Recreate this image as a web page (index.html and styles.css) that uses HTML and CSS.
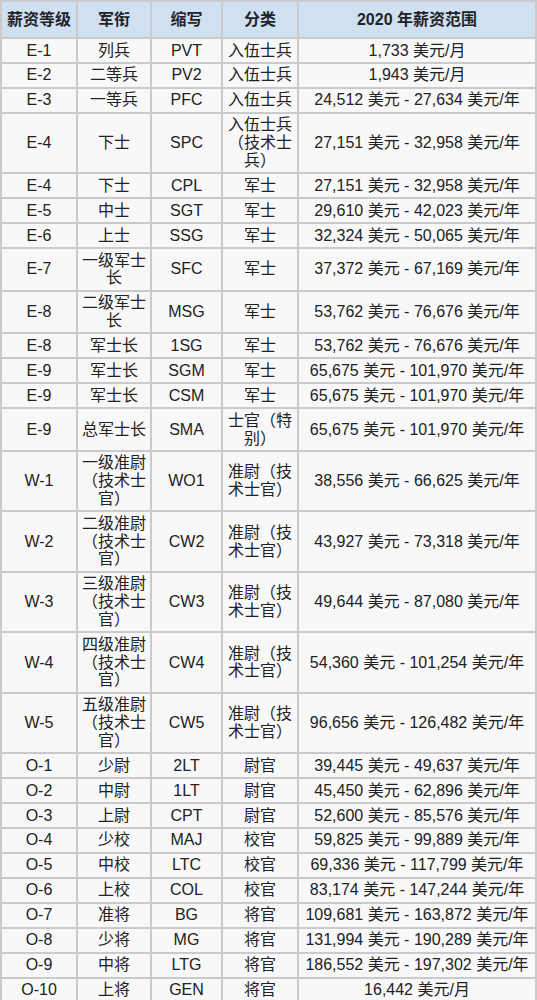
FILE: index.html
```html
<!DOCTYPE html>
<html lang="zh">
<head>
<meta charset="utf-8">
<title>薪资等级</title>
<link rel="stylesheet" href="styles.css">
</head>
<body>
<table class="pay">
<colgroup>
<col class="c1"><col class="c2"><col class="c3"><col class="c4"><col class="c5">
</colgroup>
<thead>
<tr><th>薪资等级</th><th>军衔</th><th>缩写</th><th>分类</th><th>2020 年薪资范围</th></tr>
</thead>
<tbody>
<tr><td>E-1</td><td>列兵</td><td>PVT</td><td>入伍士兵</td><td>1,733 美元/月</td></tr>
<tr><td>E-2</td><td>二等兵</td><td>PV2</td><td>入伍士兵</td><td>1,943 美元/月</td></tr>
<tr><td>E-3</td><td>一等兵</td><td>PFC</td><td>入伍士兵</td><td>24,512 美元 - 27,634 美元/年</td></tr>
<tr><td>E-4</td><td>下士</td><td>SPC</td><td>入伍士兵（技术士兵）</td><td>27,151 美元 - 32,958 美元/年</td></tr>
<tr><td>E-4</td><td>下士</td><td>CPL</td><td>军士</td><td>27,151 美元 - 32,958 美元/年</td></tr>
<tr><td>E-5</td><td>中士</td><td>SGT</td><td>军士</td><td>29,610 美元 - 42,023 美元/年</td></tr>
<tr><td>E-6</td><td>上士</td><td>SSG</td><td>军士</td><td>32,324 美元 - 50,065 美元/年</td></tr>
<tr><td>E-7</td><td>一级军士长</td><td>SFC</td><td>军士</td><td>37,372 美元 - 67,169 美元/年</td></tr>
<tr><td>E-8</td><td>二级军士长</td><td>MSG</td><td>军士</td><td>53,762 美元 - 76,676 美元/年</td></tr>
<tr><td>E-8</td><td>军士长</td><td>1SG</td><td>军士</td><td>53,762 美元 - 76,676 美元/年</td></tr>
<tr><td>E-9</td><td>军士长</td><td>SGM</td><td>军士</td><td>65,675 美元 - 101,970 美元/年</td></tr>
<tr><td>E-9</td><td>军士长</td><td>CSM</td><td>军士</td><td>65,675 美元 - 101,970 美元/年</td></tr>
<tr><td>E-9</td><td>总军士长</td><td>SMA</td><td>士官（特别）</td><td>65,675 美元 - 101,970 美元/年</td></tr>
<tr><td>W-1</td><td>一级准尉（技术士官）</td><td>WO1</td><td>准尉（技术士官）</td><td>38,556 美元 - 66,625 美元/年</td></tr>
<tr><td>W-2</td><td>二级准尉（技术士官）</td><td>CW2</td><td>准尉（技术士官）</td><td>43,927 美元 - 73,318 美元/年</td></tr>
<tr><td>W-3</td><td>三级准尉（技术士官）</td><td>CW3</td><td>准尉（技术士官）</td><td>49,644 美元 - 87,080 美元/年</td></tr>
<tr><td>W-4</td><td>四级准尉（技术士官）</td><td>CW4</td><td>准尉（技术士官）</td><td>54,360 美元 - 101,254 美元/年</td></tr>
<tr><td>W-5</td><td>五级准尉（技术士官）</td><td>CW5</td><td>准尉（技术士官）</td><td>96,656 美元 - 126,482 美元/年</td></tr>
<tr><td>O-1</td><td>少尉</td><td>2LT</td><td>尉官</td><td>39,445 美元 - 49,637 美元/年</td></tr>
<tr><td>O-2</td><td>中尉</td><td>1LT</td><td>尉官</td><td>45,450 美元 - 62,896 美元/年</td></tr>
<tr><td>O-3</td><td>上尉</td><td>CPT</td><td>尉官</td><td>52,600 美元 - 85,576 美元/年</td></tr>
<tr><td>O-4</td><td>少校</td><td>MAJ</td><td>校官</td><td>59,825 美元 - 99,889 美元/年</td></tr>
<tr><td>O-5</td><td>中校</td><td>LTC</td><td>校官</td><td>69,336 美元 - 117,799 美元/年</td></tr>
<tr><td>O-6</td><td>上校</td><td>COL</td><td>校官</td><td>83,174 美元 - 147,244 美元/年</td></tr>
<tr><td>O-7</td><td>准将</td><td>BG</td><td>将官</td><td>109,681 美元 - 163,872 美元/年</td></tr>
<tr><td>O-8</td><td>少将</td><td>MG</td><td>将官</td><td>131,994 美元 - 190,289 美元/年</td></tr>
<tr><td>O-9</td><td>中将</td><td>LTG</td><td>将官</td><td>186,552 美元 - 197,302 美元/年</td></tr>
<tr><td>O-10</td><td>上将</td><td>GEN</td><td>将官</td><td>16,442 美元/月</td></tr>
</tbody>
</table>
</body>
</html>
```

FILE: styles.css
```css
html, body {
  margin: 0;
  padding: 0;
  background: #ffffff;
}

.pay {
  border-collapse: collapse;
  table-layout: fixed;
  width: 535px;
  font-family: "Liberation Sans", "Noto Sans CJK SC", sans-serif;
  font-size: 16px;
  color: #222222;
}

.c1 { width: 76px; }
.c2 { width: 74px; }
.c3 { width: 71px; }
.c4 { width: 76px; }
.c5 { width: 238px; }

.pay th,
.pay td {
  border: 2px solid #c9cacc;
  text-align: center;
  vertical-align: middle;
  line-height: 17.75px;
  padding: 2.6px 4px;
}

.pay th {
  background: #cfe0f1;
  font-weight: bold;
  font-size: 16px;
  padding: 8.6px 2px;
  color: #1f2328;
}

.pay td {
  background: #f8f8f8;
}
```
